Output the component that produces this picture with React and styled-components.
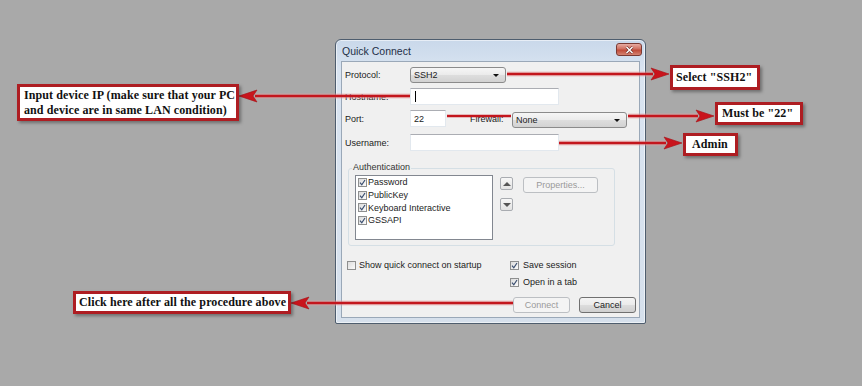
import React from 'react';
import styled, { createGlobalStyle } from 'styled-components';

// Global.
const GlobalStyle = createGlobalStyle`
    html, body {
        margin    : 0;
        padding   : 0;
        background: #a9a9a9;
    }
`;

// Page.
const Page = styled.div`
    position  : relative;
    width     : 862px;
    height    : 386px;
    overflow  : hidden;
    box-sizing: border-box;
    padding   : 39px 0 0 335px;
    background: #a9a9a9;
    font-family: "Liberation Sans", Arial, sans-serif;
`;

// Window frame.
const Window = styled.div`
    width         : 311px;
    height        : 285px;
    box-sizing    : border-box;
    display       : flex;
    flex-direction: column;
    padding       : 0 5px 5px;
    border        : 1px solid #4e5d6e;
    border-radius : 6px 6px 2px 2px;
    background    : linear-gradient(#c9d8ea, #d9e4f1 30px, #d6e0ec);
    box-shadow    : inset 0 0 0 1px rgba(255, 255, 255, .55);
`;

const TitleBar = styled.div`
    height         : 21px;
    display        : flex;
    align-items    : center;
    justify-content: space-between;
    padding-left   : 1px;
`;

const Title = styled.span`
    font-size: 10.5px;
    color    : #1e2f47;
`;

const CloseButton = styled.div`
    align-self     : flex-start;
    margin-top     : 3px;
    margin-right   : -2px;
    width          : 24px;
    height         : 11px;
    display        : flex;
    align-items    : center;
    justify-content: center;
    border         : 1px solid #7a3a33;
    border-radius  : 3px;
    background     : linear-gradient(#e7aca2, #cf6f60 45%, #c04a38 55%, #d48472);
`;

const Client = styled.div`
    flex          : 1;
    display       : flex;
    flex-direction: column;
    border        : 1px solid #9aa8b8;
    background    : #f0f0f0;
    font-size     : 9px;
    color         : #1b1b1b;
`;

// Form rows.
const Form = styled.div`
    display       : flex;
    flex-direction: column;
    padding       : 5px 0 0 3px;
`;

const Row = styled.div`
    display    : flex;
    align-items: center;
    height     : ${p => p.$height || 17}px;
    margin-top : ${p => p.$gap || 0}px;
`;

const Label = styled.span`
    width: ${p => p.$width || 65}px;
    margin-left: ${p => p.$offset || 0}px;
`;

const Combo = styled.div`
    position     : relative;
    width        : ${p => p.$width}px;
    height       : 16px;
    box-sizing   : border-box;
    margin-top   : ${p => p.$shift || 0}px;
    display      : flex;
    align-items  : center;
    padding-left : 3px;
    border       : 1px solid #8b8b8b;
    border-radius: 3px;
    background   : linear-gradient(#f6f6f6, #ebebeb 50%, #dedede 50%, #d2d2d2);

    &::after {
        content     : '';
        position    : absolute;
        right       : 6px;
        top         : 6px;
        border-left : 3px solid transparent;
        border-right: 3px solid transparent;
        border-top  : 3px solid #111;
    }
`;

const Input = styled.div`
    width       : ${p => p.$width}px;
    height      : 17px;
    box-sizing  : border-box;
    display     : flex;
    align-items : center;
    padding-left: 3px;
    background  : #fff;
    border      : 1px solid #e2e8ee;
    border-top-color: #abadb3;
`;

const Caret = styled.span`
    width     : 1px;
    height    : 11px;
    margin-left: 1px;
    background: #000;
`;

// Authentication group.
const Group = styled.div`
    position     : relative;
    width        : 267px;
    height       : 78px;
    box-sizing   : border-box;
    margin       : 17px 0 0 6px;
    padding      : 6px 0 0 6px;
    display      : flex;
    border       : 1px solid #d5dfe5;
    border-radius: 3px;
`;

const Legend = styled.span`
    position  : absolute;
    top       : -7px;
    left      : 3px;
    padding   : 0 1px;
    background: #f0f0f0;
    color     : #333;
`;

const ListBox = styled.div`
    width     : 138px;
    height    : 65px;
    box-sizing: border-box;
    padding   : 0 2px;
    border    : 1px solid #828790;
    background: #fff;
`;

const ListItem = styled.div`
    height     : 12.7px;
    display    : flex;
    align-items: center;
    gap        : 1px;
`;

const MoveColumn = styled.div`
    display       : flex;
    flex-direction: column;
    gap           : 8px;
    margin        : 2px 0 0 7px;
`;

const MoveButton = styled.div`
    width          : 13px;
    height         : 13px;
    box-sizing     : border-box;
    display        : flex;
    align-items    : center;
    justify-content: center;
    border         : 1px solid #a9acb1;
    border-radius  : 2px;
    background     : linear-gradient(#f7f7f7, #e3e3e3);
`;

const Arrow = styled.span`
    border-left  : 4px solid transparent;
    border-right : 4px solid transparent;
    ${p => p.$up ? 'border-bottom: 4px solid #555;' : 'border-top: 4px solid #555;'}
`;

const Button = styled.div`
    width          : ${p => p.$width}px;
    height         : 16px;
    box-sizing     : border-box;
    margin-left    : ${p => p.$offset || 0}px;
    margin-top     : ${p => p.$shift || 0}px;
    display        : flex;
    align-items    : center;
    justify-content: center;
    border         : 1px solid ${p => p.$disabled ? '#bcbfc3' : '#707070'};
    border-radius  : 3px;
    color          : ${p => p.$disabled ? '#9a9a9a' : '#1b1b1b'};
    background     : ${p => p.$disabled
        ? '#f4f4f4'
        : 'linear-gradient(#f4f4f4, #ebebeb 50%, #dddddd 50%, #cfcfcf)'};
`;

// Bottom options.
const Bottom = styled.div`
    display    : flex;
    padding-top: 13px;
`;

const LeftOptions = styled.div`
    width      : 168px;
    padding-left: 5px;
    box-sizing : border-box;
`;

const RightOptions = styled.div`
    display       : flex;
    flex-direction: column;
`;

const CheckRow = styled.div`
    height     : 12px;
    display    : flex;
    align-items: center;
    gap        : ${p => p.$gap || 4}px;
    margin-top : ${p => p.$top || 0}px;
`;

const Box = styled.span`
    width          : 9px;
    height         : 9px;
    box-sizing     : border-box;
    display        : flex;
    align-items    : center;
    justify-content: center;
    border         : 1px solid #8e8f8f;
    background     : linear-gradient(135deg, #dcdcdc, #fbfbfb);
`;

const ButtonRow = styled.div`
    display    : flex;
    gap        : 9px;
    margin     : 9px 0 0 3px;
`;

// Annotations.
const Callout = styled.div`
    position   : absolute;
    top        : ${p => p.$top}px;
    left       : ${p => p.$left}px;
    width      : ${p => p.$width}px;
    height     : ${p => p.$height}px;
    box-sizing : border-box;
    display    : flex;
    align-items: center;
    padding    : 0 0 0 ${p => p.$pad || 3}px;
    white-space: nowrap;
    border     : 3px solid #ae1d22;
    background : #fff;
    box-shadow : 2px 2px 3px rgba(0, 0, 0, .35);
    font-family: "Liberation Serif", "Times New Roman", serif;
    font-weight: bold;
    font-size  : 12px;
    letter-spacing: .1px;
    line-height: 14.5px;
    color      : #111;
    z-index    : 2;
`;

const Arrows = styled.svg`
    position      : absolute;
    top           : 0;
    left          : 0;
    pointer-events: none;
    z-index       : 1;
`;

function Check({ on }) {
    return (
        <Box>
            {on &&
            <svg width="7" height="7" viewBox="0 0 7 7">
                <path d="M1 3.6 L2.8 5.8 L6 1" fill="none" stroke="#3b4f70" strokeWidth="1.2" />
            </svg>
            }
        </Box>
    );
}

// Straight arrow: line plus head pointing to (x2, y).
function ArrowLine({ x1, x2, y }) {
    const dir = x2 > x1 ? 1 : -1;
    const base = x2 - dir * 16;
    return (
        <g>
            <line x1={x1} y1={y} x2={base} y2={y} stroke="#e8a0a0" strokeWidth="5" opacity=".5" />
            <line x1={x1} y1={y} x2={base} y2={y} stroke="#c3161d" strokeWidth="2.5" />
            <polygon
                points={`${x2},${y} ${base - dir * 2},${y - 6} ${base + dir * 2},${y} ${base - dir * 2},${y + 6}`}
                fill="#c9141c"
                stroke="#a51015"
                strokeWidth=".6"
            />
        </g>
    );
}

const methods = ['Password', 'PublicKey', 'Keyboard Interactive', 'GSSAPI'];

export default function App() {
    return (
        <Page>
            <GlobalStyle />
            <Window>
                <TitleBar>
                    <Title>Quick Connect</Title>
                    <CloseButton>
                        <svg width="9" height="8" viewBox="0 0 9 8">
                            <path d="M1.5 1 L7.5 7 M7.5 1 L1.5 7" stroke="#6b2a24" strokeWidth="2.6" />
                            <path d="M1.5 1 L7.5 7 M7.5 1 L1.5 7" stroke="#fff" strokeWidth="1.5" />
                        </svg>
                    </CloseButton>
                </TitleBar>

                <Client>
                    <Form>
                        <Row $height={16}>
                            <Label>Protocol:</Label>
                            <Combo $width={96}>SSH2</Combo>
                        </Row>
                        <Row $gap={5}>
                            <Label>Hostname:</Label>
                            <Input $width={149}><Caret /></Input>
                        </Row>
                        <Row $gap={5}>
                            <Label>Port:</Label>
                            <Input $width={36}>22</Input>
                            <Label $width={42} $offset={24}>Firewall:</Label>
                            <Combo $width={115} $shift={3}>None</Combo>
                        </Row>
                        <Row $gap={7}>
                            <Label>Username:</Label>
                            <Input $width={149} />
                        </Row>
                    </Form>

                    <Group>
                        <Legend>Authentication</Legend>
                        <ListBox>
                            {methods.map(m => (
                                <ListItem key={m}>
                                    <Check on />
                                    <span>{m}</span>
                                </ListItem>
                            ))}
                        </ListBox>
                        <MoveColumn>
                            <MoveButton><Arrow $up /></MoveButton>
                            <MoveButton><Arrow /></MoveButton>
                        </MoveColumn>
                        <Button $width={75} $offset={10} $shift={2} $disabled>Properties...</Button>
                    </Group>

                    <Bottom>
                        <LeftOptions>
                            <CheckRow $gap={3}>
                                <Check />
                                <span>Show quick connect on startup</span>
                            </CheckRow>
                        </LeftOptions>
                        <RightOptions>
                            <CheckRow>
                                <Check on />
                                <span>Save session</span>
                            </CheckRow>
                            <CheckRow $top={5}>
                                <Check on />
                                <span>Open in a tab</span>
                            </CheckRow>
                            <ButtonRow>
                                <Button $width={57} $disabled>Connect</Button>
                                <Button $width={57}>Cancel</Button>
                            </ButtonRow>
                        </RightOptions>
                    </Bottom>
                </Client>
            </Window>

            <Arrows width="862" height="386">
                <ArrowLine x1={507} x2={669} y={74} />
                <ArrowLine x1={410} x2={239} y={96} />
                <line x1={447} y1={116} x2={511} y2={116} stroke="#c3161d" strokeWidth="2.5" />
                <ArrowLine x1={628} x2={714} y={116} />
                <ArrowLine x1={559} x2={682} y={143} />
                <ArrowLine x1={513} x2={291} y={303} />
            </Arrows>

            <Callout $top={65} $left={670} $width={90} $height={25}>Select "SSH2"</Callout>
            <Callout $top={84} $left={17} $width={222} $height={37} $pad={4}>
                <span>
                    Input device IP (make sure that your PC<br />
                    and device are in same LAN condition)
                </span>
            </Callout>
            <Callout $top={102} $left={715} $width={88} $height={23} $pad={4}>Must be "22"</Callout>
            <Callout $top={133} $left={683} $width={55} $height={23} $pad={6}>Admin</Callout>
            <Callout $top={291} $left={73} $width={218} $height={23} $pad={3}>Click here after all the procedure above</Callout>
        </Page>
    );
}
